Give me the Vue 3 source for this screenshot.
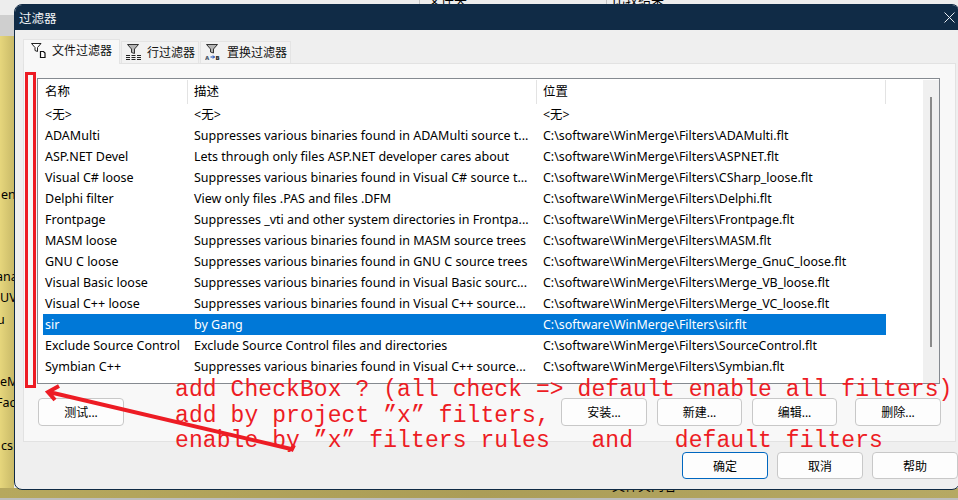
<script setup>
const rows = [
  ['<无>', '<无>', '<无>'],
  ['ADAMulti', 'Suppresses various binaries found in ADAMulti source t...', 'C:\\software\\WinMerge\\Filters\\ADAMulti.flt'],
  ['ASP.NET Devel', 'Lets through only files ASP.NET developer cares about', 'C:\\software\\WinMerge\\Filters\\ASPNET.flt'],
  ['Visual C# loose', 'Suppresses various binaries found in Visual C# source t...', 'C:\\software\\WinMerge\\Filters\\CSharp_loose.flt'],
  ['Delphi filter', 'View only files .PAS and files .DFM', 'C:\\software\\WinMerge\\Filters\\Delphi.flt'],
  ['Frontpage', 'Suppresses _vti and other system directories in Frontpa...', 'C:\\software\\WinMerge\\Filters\\Frontpage.flt'],
  ['MASM loose', 'Suppresses various binaries found in MASM source trees', 'C:\\software\\WinMerge\\Filters\\MASM.flt'],
  ['GNU C loose', 'Suppresses various binaries found in GNU C source trees', 'C:\\software\\WinMerge\\Filters\\Merge_GnuC_loose.flt'],
  ['Visual Basic loose', 'Suppresses various binaries found in Visual Basic sourc...', 'C:\\software\\WinMerge\\Filters\\Merge_VB_loose.flt'],
  ['Visual C++ loose', 'Suppresses various binaries found in Visual C++ source...', 'C:\\software\\WinMerge\\Filters\\Merge_VC_loose.flt'],
  ['sir', 'by Gang', 'C:\\software\\WinMerge\\Filters\\sir.flt'],
  ['Exclude Source Control', 'Exclude Source Control files and directories', 'C:\\software\\WinMerge\\Filters\\SourceControl.flt'],
  ['Symbian C++', 'Suppresses various binaries found in Visual C++ source...', 'C:\\software\\WinMerge\\Filters\\Symbian.flt'],
]
const edgeTexts = [
  { t: 'en', y: 186, x: 1 }, { t: 'ana', y: 268, x: -4 }, { t: 'UV', y: 289, x: 0 }, { t: 'u', y: 311, x: -3 },
  { t: 'eM', y: 373, x: 0 }, { t: 'Fac', y: 394, x: -4 }, { t: 'cs', y: 437, x: 1 },
]
const notes = [
  'add CheckBox ? (all check => default enable all filters)',
  'add by project ”x” filters,',
  'enable by ”x” filters rules   and   default filters',
]
const selected = 10
</script>

<template>
  <div class="desk">
    <div class="band-top"></div>
    <div class="band-gray"></div>
    <div class="band-yellow"></div>
    <div class="band-olive"></div>
    <div class="band-bottom"></div>
    <i class="tick tick-a"></i>
    <i class="tick tick-b"></i>
    <span class="peek peek-a">文件夹</span>
    <span class="peek peek-b">比较结果</span>
    <span class="peek peek-c">文件夹内容</span>
    <span v-for="e in edgeTexts" :key="e.t" class="edge" :style="{ top: e.y + 'px', left: e.x + 'px' }">{{ e.t }}</span>

    <section class="dialog">
      <header class="title">
        <span>过滤器</span>
        <svg class="close" width="11" height="11" viewBox="0 0 11 11"><path d="M.5.5l10 10M10.500.5l-10 10" stroke="#e8edf2" stroke-width="1" fill="none"/></svg>
      </header>
      <div class="body">
        <nav class="tabs">
          <div class="tab active">
            <svg width="15" height="15" viewBox="0 0 15 15"><path d="M.5.5h9.500L6.500 4.500v4l-2.500-1v-3z" fill="#fff" stroke="#222"/><path d="M9.500 8.500h3l1.500 1.500v4.500H9.500z" fill="#fff" stroke="#111" stroke-width="1.200"/></svg>
            <span>文件过滤器</span>
          </div>
          <div class="tab">
            <svg width="15" height="16" viewBox="0 0 15 16"><path d="M1.500.5h11L8.500 5v4.500l-3-1V5z" fill="#b5b5b5" stroke="#333"/><path d="M0 11.500h4M5.500 11.500h4M11 11.500h4M0 13.500h4M5.500 13.500h4M11 13.500h4M0 15.500h4M5.500 15.500h4M11 15.500h4" stroke="#222"/></svg>
            <span>行过滤器</span>
          </div>
          <div class="tab">
            <svg width="16" height="16" viewBox="0 0 16 16"><path d="M1.500.5h11L8.500 5v4l-3-1V5z" fill="#b5b5b5" stroke="#333"/><text x="0" y="15.500" class="ab ab-a">A</text><path d="M5.500 13h4M8 11.500L9.500 13 8 14.500" stroke="#0a3fb0" fill="none"/><text x="10.500" y="15.500" class="ab">B</text></svg>
            <span>置换过滤器</span>
          </div>
        </nav>
        <div class="panel">
          <div class="list">
            <div class="table">
              <div class="row head">
                <span>名称</span><span>描述</span><span>位置</span>
              </div>
              <div v-for="(r, i) in rows" :key="i" class="row" :class="{ sel: i === selected }">
                <span v-for="(c, j) in r" :key="j">{{ c }}</span>
              </div>
            </div>
            <div class="scroll"><i></i></div>
          </div>
          <div class="actions">
            <button class="btn">测试...</button>
            <div class="actions-right">
              <button class="btn">安装...</button>
              <button class="btn w-a">新建...</button>
              <button class="btn w-b">编辑...</button>
              <button class="btn">删除...</button>
            </div>
          </div>
        </div>
        <footer class="footer">
          <button class="btn primary">确定</button>
          <button class="btn">取消</button>
          <button class="btn">帮助</button>
        </footer>
      </div>
    </section>

    <div class="red-box"></div>
    <svg class="arrow" width="958" height="500" viewBox="0 0 958 500">
      <path d="M291 449L49 392M59 386L48 392L55 400M294 445L291 451" fill="none" stroke="#ed1c24" stroke-width="4"/>
    </svg>
    <div class="notes">
      <div v-for="n in notes" :key="n" class="note">{{ n }}</div>
    </div>
  </div>
</template>

<style scoped>
.desk {
  position: relative;
  width: 958px;
  height: 500px;
  overflow: hidden;
  background: #f0f0f0;
  font-family: "Noto Sans", "Noto Sans CJK SC", sans-serif;
  font-size: 12.500px;
  color: #000;
}
.band-top { position: absolute; left: 0; top: 0; width: 100%; height: 15px; background: #ededed; }
.band-gray { position: absolute; left: 0; top: 15px; width: 14px; height: 21px; background: #cfcfcf; }
.band-yellow {
  position: absolute; left: 0; top: 36px; width: 14px; height: 460px;
  background: linear-gradient(90deg, #e6d67c, #c9ba68);
}
.band-olive {
  position: absolute; left: 0; top: 488px; width: 100%; height: 10px;
  background: linear-gradient(90deg, #b6a85e, #ab9d57 50%, #b6a964);
}
.band-bottom { position: absolute; left: 0; top: 498px; width: 100%; height: 2px; background: #bdbdbd; }
.tick { position: absolute; top: 0; width: 1px; height: 4px; background: #c4c4c4; }
.tick-a { left: 419px; }
.tick-b { left: 606px; }
.peek { position: absolute; font-size: 13px; line-height: 16px; white-space: nowrap; }
.peek-a { left: 428px; top: -9px; }
.peek-b { left: 612px; top: -9px; }
.peek-c { left: 612px; top: 477px; }
.edge { position: absolute; line-height: 18px; white-space: nowrap; }
.dialog {
  position: absolute;
  left: 14px;
  top: 4px;
  width: 946px;
  height: 486px;
  box-sizing: border-box;
  border: 1px solid #0f2a45;
  border-radius: 8px;
  overflow: hidden;
  background: #efefef;
  display: flex;
  flex-direction: column;
}
.title {
  height: 25px;
  flex: none;
  background: #102b46;
  color: #f2f4f7;
  padding-left: 4px;
  display: flex;
  align-items: center;
  position: relative;
  font-size: 12.500px;
}
.close { position: absolute; right: 4px; top: 7px; }
.body { flex: 1; padding: 9px 0 0 8px; display: flex; flex-direction: column; }
.tabs { display: flex; align-items: flex-end; height: 24px; position: relative; z-index: 1; font-size: 12px; }
.tab {
  height: 22px;
  box-sizing: border-box;
  background: #f2f2f2;
  border: 1px solid #e4e4e4;
  border-bottom: 0;
  display: flex;
  align-items: center;
  gap: 6px;
  padding: 0 3px 2px 4px;
  margin-left: 1px;
  color: #111;
}
.tab svg { flex: none; }
.tab.active {
  height: 25px;
  margin-left: 0;
  margin-bottom: -1px;
  width: 97px;
  background: #f8f8f8;
  padding: 0 0 4px 7px;
  gap: 6px;
}
.ab { font: bold 5.500px "DejaVu Sans", sans-serif; fill: #222; }
.ab-a { fill: #456; }
.panel {
  width: 933px;
  height: 379px;
  box-sizing: border-box;
  background: #f8f8f8;
  border: 1px solid #e2e2e2;
  padding: 14px 15px 0 13px;
}
.list {
  height: 306px;
  box-sizing: border-box;
  border: 1px solid #858a90;
  background: #fff;
  display: flex;
  justify-content: space-between;
  overflow: hidden;
}
.table { width: 843px; margin-left: 5px; padding-top: 1px; }
.row {
  display: grid;
  grid-template-columns: 145px 349px 349px;
  height: 21px;
  line-height: 21px;
  white-space: nowrap;
}
.row span { padding-left: 6px; overflow: hidden; }
.row span:first-child { padding-left: 2px; }
.row span:last-child { font-size: 12.400px; }
.row.head { height: 24px; line-height: 24px; }
.row.head span { border-right: 1px solid #e3e3e3; box-sizing: border-box; }
.row.sel { background: #0078d7; color: #fff; }
.scroll { width: 16px; margin-top: 1px; background: #f0f0f0; flex: none; position: relative; }
.scroll i { display: block; width: 2px; height: 250px; margin: 17px 0 0 7px; background: #8a8a8a; }
.actions { display: flex; justify-content: space-between; margin-top: 14px; margin-left: 1px; margin-right: -1px; }
.actions-right { display: flex; gap: 10px; }
.btn {
  width: 86px;
  height: 28px;
  box-sizing: border-box;
  border: 1px solid #c8c8c8;
  border-radius: 4px;
  background: #fdfdfd;
  font: inherit;
  font-size: 12px;
  color: #000;
  padding: 0;
}
.w-a { width: 85px; }
.w-b { width: 85px; margin-right: 8px; }
.footer { display: flex; justify-content: flex-end; gap: 9px; margin-top: 10px; padding-right: 1px; }
.footer .btn { height: 27px; }
.btn.primary { border: 1.500px solid #0067c0; }
.red-box {
  position: absolute; left: 25px; top: 72px; width: 11px; height: 316px;
  box-sizing: border-box; border: 3px solid #ed1c24;
}
.arrow { position: absolute; left: 0; top: 0; pointer-events: none; }
.notes {
  position: absolute; left: 175px; top: 378px;
  font-family: "Liberation Mono", monospace;
  font-size: 23px;
  letter-spacing: 0.080px;
  line-height: 25.500px;
  color: #ed1c24;
  white-space: pre;
}
</style>
